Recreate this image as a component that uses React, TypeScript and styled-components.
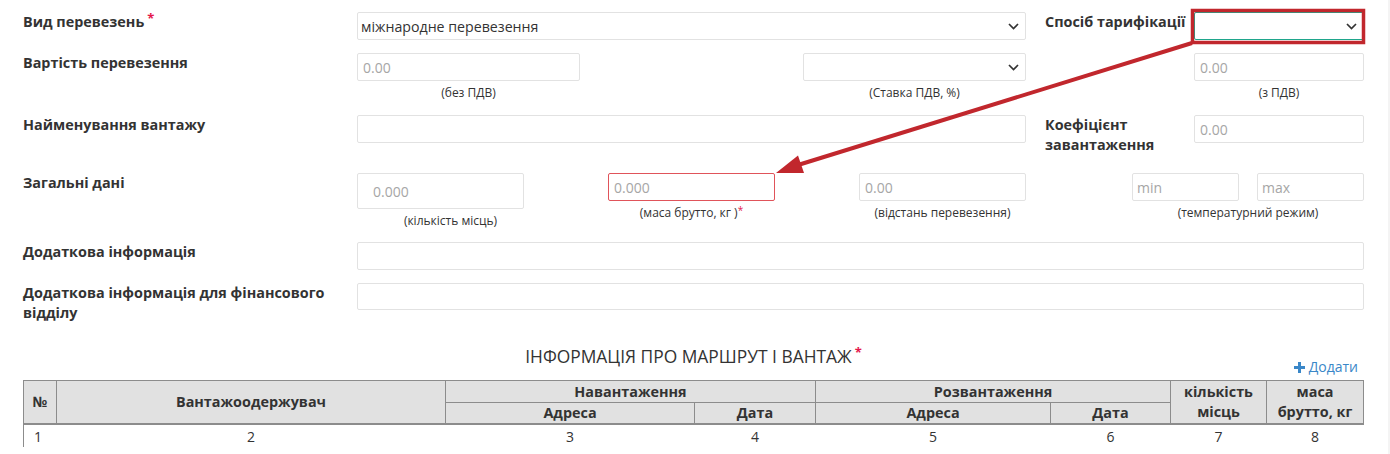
import React from "react";
import styled, { createGlobalStyle } from "styled-components";

const GlobalStyle = createGlobalStyle`
  html, body {
    margin: 0;
    padding: 0;
    background: #fff;
  }
  * {
    box-sizing: border-box;
  }
`;

const Page = styled.div`
  position: relative;
  display: flex;
  width: 1390px;
  height: 454px;
  overflow: hidden;
  background: #fff;
  font-family: "Open Sans", "Liberation Sans", sans-serif;
  color: #333;
`;

const Main = styled.div`
  flex: 1;
  padding: 12px 24px 0 23px;
`;

const Strip = styled.div`
  width: 5px;
  background: #f4f4f4;
`;

const FormRow = styled.div<{ $mb: number }>`
  display: grid;
  grid-template-columns: 334px 1fr;
  margin-bottom: ${(p) => p.$mb}px;
`;

const Label = styled.div<{ $pl?: number }>`
  font-size: 14.4px;
  font-weight: 700;
  line-height: 20px;
  color: #333;
  padding-left: ${(p) => p.$pl || 0}px;
  padding-right: 6px;
`;

const Req = styled.sup`
  color: #e4184c;
  font-size: 13px;
  font-weight: 700;
  margin-left: 3px;
  vertical-align: top;
  position: relative;
  top: -4px;
`;

const Fields = styled.div<{ $cols: string }>`
  display: grid;
  grid-template-columns: ${(p) => p.$cols};
  align-items: start;
`;

const Group = styled.div<{ $w?: number; $end?: boolean }>`
  display: flex;
  flex-direction: column;
  width: ${(p) => (p.$w ? `${p.$w}px` : "auto")};
  justify-self: ${(p) => (p.$end ? "end" : "stretch")};
`;

const Pair = styled.div`
  display: grid;
  grid-template-columns: 107px 107px;
  column-gap: 18px;
`;

const Input = styled.input<{ $h?: number; $pl?: number; $error?: boolean }>`
  display: block;
  width: 100%;
  height: ${(p) => p.$h || 28}px;
  padding: 0 4px 0 ${(p) => p.$pl || 5}px;
  border: 1px solid ${(p) => (p.$error ? "#e0535a" : "#e2e2e2")};
  border-radius: 2px;
  background: #fff;
  font-family: "Open Sans", "Liberation Sans", sans-serif;
  font-size: 14px;
  color: #333;
  outline: none;
  &::placeholder {
    color: #a6a6a6;
  }
`;

const SelectBox = styled.div<{ $focus?: boolean }>`
  display: flex;
  align-items: center;
  justify-content: space-between;
  height: 28px;
  padding: 0 6px 0 3px;
  border: 1px solid ${(p) => (p.$focus ? "#1fa68c" : "#e2e2e2")};
  border-radius: 2px;
  background: #fff;
  font-size: 14.2px;
  color: #333;
`;

const Hint = styled.div<{ $shift?: number }>`
  margin-top: 4px;
  padding-left: ${(p) => p.$shift || 0}px;
  text-align: center;
  font-size: 12px;
  line-height: 16px;
  color: #333;
  white-space: nowrap;
`;

const HintStar = styled.sup`
  color: #e4184c;
  font-size: 10px;
  vertical-align: top;
  position: relative;
  top: -3px;
`;

const TitleBar = styled.div`
  display: grid;
  grid-template-columns: 1fr auto 1fr;
  align-items: end;
  margin-top: 22px;
  margin-bottom: 2px;
`;

const Title = styled.h3`
  grid-column: 2;
  margin: 0;
  padding-bottom: 11px;
  font-size: 17.4px;
  font-weight: 400;
  line-height: 22px;
  text-transform: uppercase;
  color: #333;
`;

const AddLink = styled.a`
  grid-column: 3;
  justify-self: end;
  display: flex;
  align-items: center;
  gap: 4px;
  padding: 0 6px 2px 0;
  font-size: 14px;
  line-height: 18px;
  color: #3a87c8;
  text-decoration: none;
  cursor: pointer;
`;

const Table = styled.table`
  width: 100%;
  border-collapse: collapse;
  table-layout: fixed;
  font-size: 14px;
  color: #333;
`;

const Th = styled.th<{ $h: number }>`
  height: ${(p) => p.$h}px;
  padding: 0 2px;
  background: #e1e1e1;
  border: 1px solid #8c8c8c;
  font-size: 14.4px;
  font-weight: 700;
  line-height: 20px;
  text-align: center;
  vertical-align: middle;
`;

const Td = styled.td<{ $left?: boolean }>`
  padding: 2px ${(p) => (p.$left ? "10px" : "0")} 0;
  line-height: 20px;
  text-align: ${(p) => (p.$left ? "left" : "center")};
  border-left: ${(p) => (p.$left ? "1px solid #8c8c8c" : "none")};
  border-top: 2px solid #8c8c8c;
`;

const Overlay = styled.svg`
  position: absolute;
  top: 0;
  left: 0;
  pointer-events: none;
`;

const Chevron = () => (
  <svg width="11" height="7" viewBox="0 0 11 7">
    <polyline points="1,1 5.5,5.5 10,1" fill="none" stroke="#333" strokeWidth="1.7" />
  </svg>
);

const PlusIcon = () => (
  <svg width="11" height="11" viewBox="0 0 11 11">
    <rect x="4" y="0" width="3" height="11" fill="#3a87c8" />
    <rect x="0" y="4" width="11" height="3" fill="#3a87c8" />
  </svg>
);

const columns = [33, 389, 249, 121, 235, 120, 96, 97];

export default function App() {
  return (
    <>
      <GlobalStyle />
      <Page>
        <Main>
          <FormRow $mb={13}>
            <Label>
              Вид перевезень<Req>*</Req>
            </Label>
            <Fields $cols="669px 168px 1fr">
              <SelectBox>
                <span>міжнародне перевезення</span>
                <Chevron />
              </SelectBox>
              <Label $pl={19}>Спосіб тарифікації</Label>
              <SelectBox $focus>
                <span />
                <Chevron />
              </SelectBox>
            </Fields>
          </FormRow>

          <FormRow $mb={14}>
            <Label>Вартість перевезення</Label>
            <Fields $cols="223px 223px 223px 168px 1fr">
              <Group>
                <Input placeholder="0.00" />
                <Hint>(без ПДВ)</Hint>
              </Group>
              <div />
              <Group>
                <SelectBox>
                  <span />
                  <Chevron />
                </SelectBox>
                <Hint>(Ставка ПДВ, %)</Hint>
              </Group>
              <div />
              <Group>
                <Input placeholder="0.00" />
                <Hint>(з ПДВ)</Hint>
              </Group>
            </Fields>
          </FormRow>

          <FormRow $mb={18}>
            <Label>Найменування вантажу</Label>
            <Fields $cols="669px 168px 1fr">
              <Input />
              <Label $pl={19}>Коефіцієнт завантаження</Label>
              <Input placeholder="0.00" />
            </Fields>
          </FormRow>

          <FormRow $mb={13}>
            <Label>Загальні дані</Label>
            <Fields $cols="167px 251px 251px 1fr">
              <Group>
                <Input placeholder="0.000" $h={36} $pl={15} />
                <Hint $shift={20}>(кількість місць)</Hint>
              </Group>
              <Group $w={167} $end>
                <Input placeholder="0.000" $error />
                <Hint>
                  (маса брутто, кг )<HintStar>*</HintStar>
                </Hint>
              </Group>
              <Group $w={167} $end>
                <Input placeholder="0.00" />
                <Hint>(відстань перевезення)</Hint>
              </Group>
              <Group $end>
                <Pair>
                  <Input placeholder="min" $pl={4} />
                  <Input placeholder="max" $pl={4} />
                </Pair>
                <Hint>(температурний режим)</Hint>
              </Group>
            </Fields>
          </FormRow>

          <FormRow $mb={13}>
            <Label>Додаткова інформація</Label>
            <Input />
          </FormRow>

          <FormRow $mb={0}>
            <Label>Додаткова інформація для фінансового відділу</Label>
            <Input $h={27} />
          </FormRow>

          <TitleBar>
            <Title>
              Інформація про маршрут і вантаж<Req>*</Req>
            </Title>
            <AddLink>
              <PlusIcon />
              Додати
            </AddLink>
          </TitleBar>

          <Table>
            <colgroup>
              {columns.map((w, i) => (
                <col key={i} style={{ width: w }} />
              ))}
            </colgroup>
            <thead>
              <tr>
                <Th $h={22} rowSpan={2}>№</Th>
                <Th $h={22} rowSpan={2}>Вантажоодержувач</Th>
                <Th $h={22} colSpan={2}>Навантаження</Th>
                <Th $h={22} colSpan={2}>Розвантаження</Th>
                <Th $h={22} rowSpan={2}>кількість місць</Th>
                <Th $h={22} rowSpan={2}>маса брутто, кг</Th>
              </tr>
              <tr>
                <Th $h={21}>Адреса</Th>
                <Th $h={21}>Дата</Th>
                <Th $h={21}>Адреса</Th>
                <Th $h={21}>Дата</Th>
              </tr>
            </thead>
            <tbody>
              <tr>
                <Td $left>1</Td>
                {[2, 3, 4, 5, 6, 7, 8].map((n) => (
                  <Td key={n}>{n}</Td>
                ))}
              </tr>
            </tbody>
          </Table>
        </Main>
        <Strip />

        <Overlay width="1390" height="454" viewBox="0 0 1390 454">
          <rect x="1192.5" y="10.5" width="171" height="32" fill="none" stroke="#c1272d" strokeWidth="3.5" />
          <line x1="1192" y1="43" x2="798" y2="165" stroke="#c1272d" strokeWidth="4" />
          <polygon points="776,173 798,155.5 804,173" fill="#c1272d" />
        </Overlay>
      </Page>
    </>
  );
}
